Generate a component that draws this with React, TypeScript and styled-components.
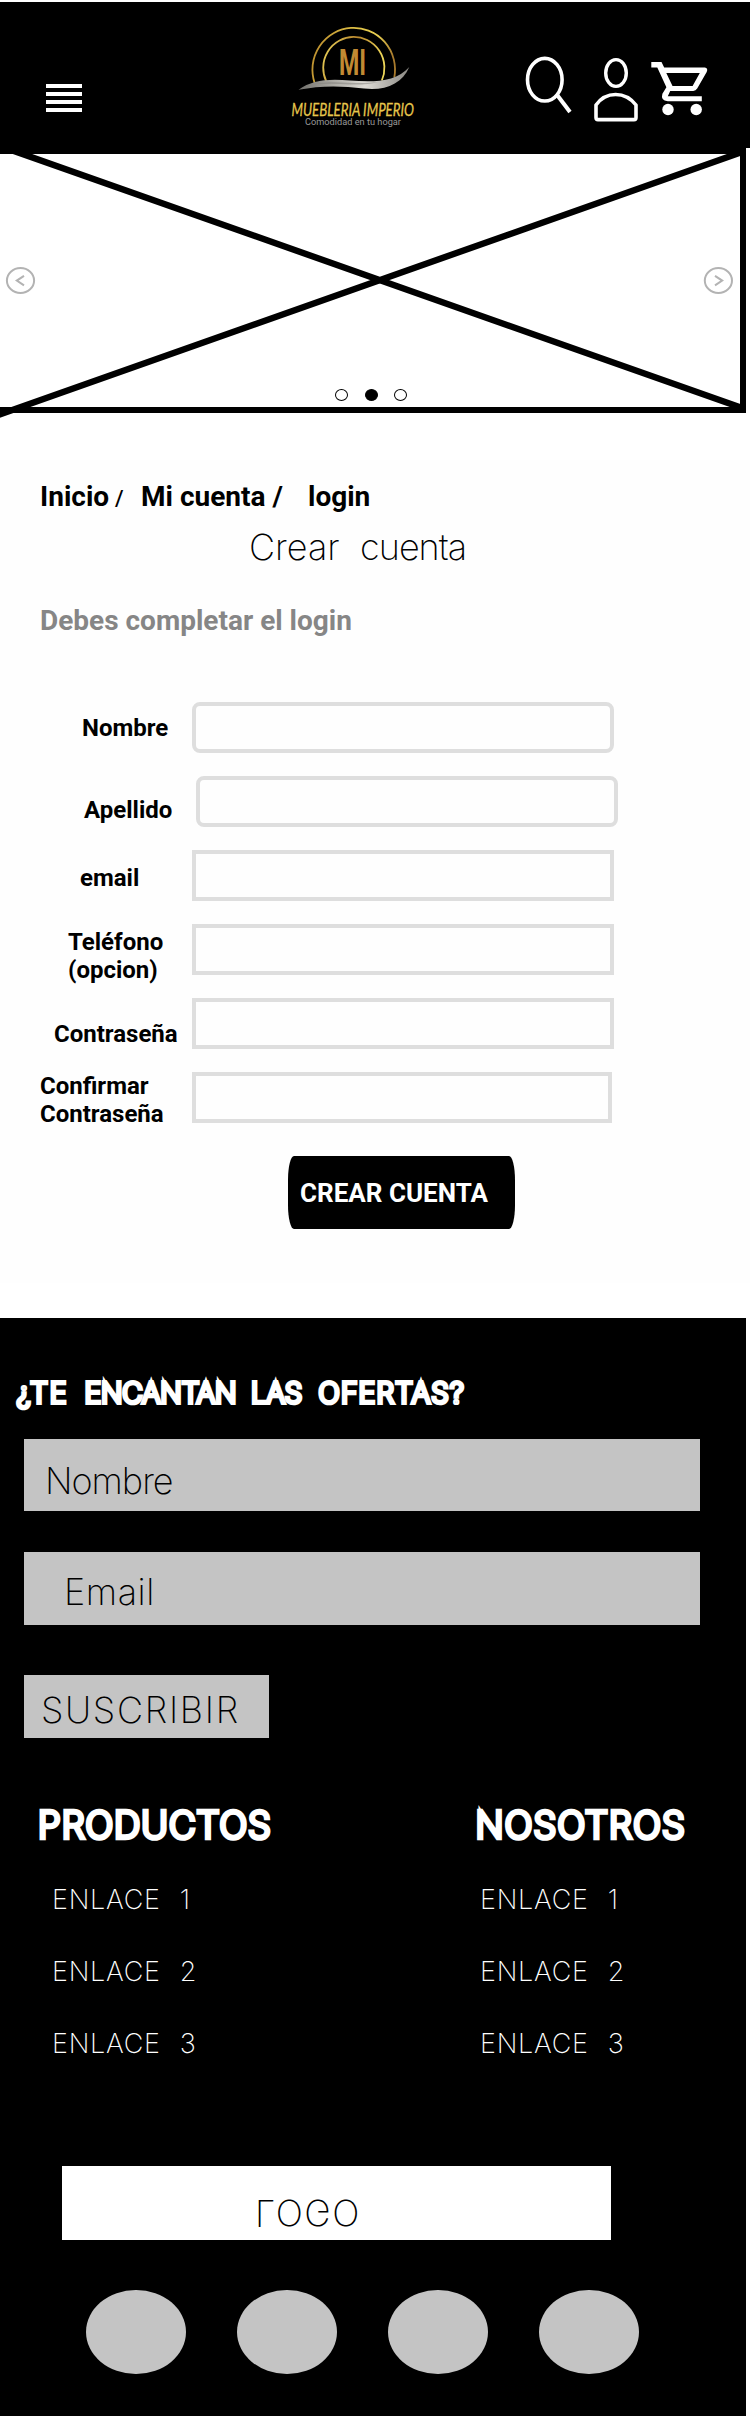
import React from 'react';
import styled, { createGlobalStyle } from 'styled-components';

const GlobalStyle = createGlobalStyle`
  * { box-sizing: border-box; }
  body { margin: 0; background: #fff; font-family: Roboto, sans-serif; color: #000; }
  h1, h2, h3, p, ul { margin: 0; padding: 0; font-weight: inherit; }
  ul { list-style: none; }
`;

const Page = styled.div`
  width: 750px;
  height: 2416px;
  padding-top: 2px;
  overflow: hidden;
`;

const Header = styled.header`
  display: flex;
  height: 146px;
  padding-left: 46px;
  background: #000;
`;

const MenuButton = styled.div`
  display: flex;
  flex-direction: column;
  gap: 4px;
  width: 36px;
  margin-top: 82px;
`;

const MenuBar = styled.span`
  height: 4px;
  background: #fff;
`;

const Brand = styled.svg`
  margin: 13px 0 0 184px;
  flex: none;
  overflow: visible;
`;

const HeaderIcons = styled.svg`
  margin: 50px 0 0 84px;
  flex: none;
`;

const Carousel = styled.section`
  position: relative;
  display: flex;
  justify-content: space-between;
  align-items: flex-start;
  width: 746px;
  height: 265px;
  padding: 112px 6px 0 5px;
  border: 6px solid #000;
  border-left: 0;
`;

const Cross = styled.svg`
  position: absolute;
  left: 0;
  top: 0;
  overflow: visible;
`;

const Arrow = styled.svg`
  position: relative;
  fill: none;
  stroke: #b3b3b3;
  stroke-width: 2;
`;

const Dots = styled.div`
  display: flex;
  gap: 16.6px;
  margin: 123px 0 0 3px;
`;

const Dot = styled.span<{ $on?: boolean }>`
  width: 13px;
  height: 12px;
  border: 1px solid #000;
  border-radius: 50%;
  background: ${p => (p.$on ? '#000' : 'transparent')};
`;

const Main = styled.main`
  height: 823px;
  margin: 47px 0 35px;
  padding-top: 23px;
  background: #fefefe;
`;

const Breadcrumb = styled.nav`
  display: flex;
  height: 28px;
  padding-left: 40px;
  font-size: 28px;
  line-height: 28px;
  font-weight: 700;
  white-space: pre;
`;

const Crumb = styled.span<{ $w: number }>`
  width: ${p => p.$w}px;
`;

const Slash = styled.span`
  width: 26px;
  font-size: 22px;
  font-weight: 500;
  line-height: 32px;
`;

const Thin = styled.span<{ $ls?: number }>`
  font-family: Inter, sans-serif;
  font-weight: 200;
  font-size: 36px;
  line-height: 44px;
  letter-spacing: ${p => p.$ls ?? 0}px;
  white-space: nowrap;
`;

const Title = styled.h1`
  height: 44px;
  margin: 14px 0 0 249px;
  display: flex;
  gap: 20.5px;
`;

const Hint = styled.p`
  margin: 38px 0 67px 40px;
  font-size: 28px;
  line-height: 28px;
  font-weight: 700;
  color: #868686;
`;

const Form = styled.form`
  display: flex;
  flex-direction: column;
  gap: 23px;
`;

const Field = styled.label`
  display: flex;
  align-items: flex-start;
  height: 51px;
`;

const LabelText = styled.span<{ $x: number; $y: number; $w: number }>`
  width: ${p => p.$w}px;
  padding: ${p => p.$y}px 0 0 ${p => p.$x}px;
  font-size: 24px;
  line-height: 28px;
  font-weight: 700;
  white-space: pre;
`;

const Input = styled.span<{ $w: number; $round?: boolean }>`
  width: ${p => p.$w}px;
  height: 51px;
  border: 4px solid #dedede;
  border-radius: ${p => (p.$round ? 8 : 0)}px;
  background: #fefefe;
`;

const Submit = styled.div`
  width: 227px;
  height: 73px;
  margin: 10px 0 0 288px;
  padding: 23px 0 0 12px;
  border-radius: 6px / 24px;
  background: #000;
  color: #fff;
  font-size: 26px;
  line-height: 28px;
  font-weight: 700;
  white-space: nowrap;
`;

const Footer = styled.footer`
  width: 746px;
  height: 1098px;
  padding-top: 59px;
  background: #000;
  color: #fff;
`;

const Offer = styled.h2`
  display: flex;
  height: 32px;
  padding-left: 16.5px;
  font-family: Inter, sans-serif;
  font-weight: 200;
  font-size: 28px;
  line-height: 32px;
  -webkit-text-stroke: 4.2px #fff;
`;

const OfferWord = styled.span<{ $w: number; $ls: number }>`
  width: ${p => p.$w}px;
  letter-spacing: ${p => p.$ls}px;
  white-space: nowrap;
`;

const GreyBox = styled.div<{ $w?: number; $h: number; $top: number; $x: number; $y: number }>`
  width: ${p => p.$w ?? 676}px;
  height: ${p => p.$h}px;
  margin: ${p => p.$top}px 0 0 24.4px;
  padding: ${p => p.$y}px 0 0 ${p => p.$x}px;
  background: #c4c4c4;
  color: #000;
  line-height: 44px;
  display: flex;
`;

const Columns = styled.div`
  display: flex;
  margin-top: 65px;
`;

const Column = styled.div<{ $x: number; $w: number }>`
  flex: none;
  width: ${p => p.$w}px;
  padding-left: ${p => p.$x}px;
`;

const ColumnTitle = styled.h3<{ $ls: number }>`
  height: 44px;
  font-family: Inter, sans-serif;
  font-weight: 200;
  font-size: 36.5px;
  line-height: 44px;
  letter-spacing: ${p => p.$ls}px;
  -webkit-text-stroke: 4.5px #fff;
`;

const Links = styled.ul<{ $x: number }>`
  display: flex;
  flex-direction: column;
  gap: 44px;
  margin: 39px 0 0 ${p => p.$x}px;
  font-family: Inter, sans-serif;
  font-weight: 200;
  font-size: 27px;
  line-height: 28px;
  letter-spacing: 0.7px;
  word-spacing: 11px;
`;

const LogoBox = styled.div`
  display: flex;
  width: 549px;
  height: 74px;
  margin: 108px 0 0 62px;
  padding: 25px 0 0 193px;
  background: #fff;
  color: #000;
`;

const Mirrored = styled(Thin)`
  display: block;
  height: 44px;
  transform: scaleY(-1);
`;

const Circles = styled.div`
  display: flex;
  gap: 51.5px;
  margin: 50px 0 0 86px;
`;

const Circle = styled.span`
  width: 99.5px;
  height: 84px;
  border-radius: 50%;
  background: #c4c4c4;
`;

const fields = [
  { text: 'Nombre', x: 82, y: 12, col: 192, w: 422, round: true },
  { text: 'Apellido', x: 84, y: 20, col: 196, w: 422, round: true },
  { text: 'email', x: 80, y: 14, col: 192, w: 422 },
  { text: 'Teléfono\n(opcion)', x: 68, y: 4, col: 192, w: 422 },
  { text: 'Contraseña', x: 54, y: 22, col: 192, w: 422 },
  { text: 'Confirmar\nContraseña', x: 40, y: 0, col: 192, w: 420 },
];

const links = ['ENLACE 1', 'ENLACE 2', 'ENLACE 3'];

function BrandLogo() {
  return (
    <Brand width="170" height="120" viewBox="266 15 170 120">
      <defs>
        <linearGradient id="gold" x1="0" y1="0.2" x2="1" y2="0.4">
          <stop offset="0" stopColor="#b98a2c" />
          <stop offset="0.5" stopColor="#e2c548" />
          <stop offset="0.75" stopColor="#e8cf52" />
          <stop offset="1" stopColor="#a87a2c" />
        </linearGradient>
        <linearGradient id="gold2" x1="0" y1="0" x2="1" y2="0.3">
          <stop offset="0" stopColor="#f0dc60" />
          <stop offset="0.5" stopColor="#b8872e" />
          <stop offset="1" stopColor="#ecd558" />
        </linearGradient>
        <linearGradient id="silver" x1="0" y1="0" x2="1" y2="0">
          <stop offset="0" stopColor="#6f6e6a" />
          <stop offset="0.3" stopColor="#aaa8a2" />
          <stop offset="0.6" stopColor="#dddbd5" />
          <stop offset="1" stopColor="#8a8883" />
        </linearGradient>
      </defs>
      <path d="M314.6 83 A41.3 41.8 0 1 1 394.3 77.5" fill="none" stroke="url(#gold)" strokeWidth="1.8" />
      <path d="M326.3 81.5 A30.6 31 0 1 1 381.8 80.5" fill="none" stroke="url(#gold2)" strokeWidth="1.8" />
      <path d="M298.5 89.8 C312 80 328 78.5 350 80.5 C374 82.5 396 82 409.3 67 C402 84 385 91 364 88.5 C340 85.5 320 85.5 298.5 89.8Z" fill="url(#silver)" />
      <path d="M314 84 C336 79.5 356 85 378 82 C362 87 340 83 314 84Z" fill="#7e7c77" opacity="0.5" />
      <text x="339" y="75" textLength="27" lengthAdjust="spacingAndGlyphs" fontFamily="Roboto, sans-serif" fontWeight="700" fontSize="37" fill="#c18a33">MI</text>
      <text x="291.5" y="116" textLength="122.5" lengthAdjust="spacingAndGlyphs" fontFamily="Lato, sans-serif" fontStyle="italic" fontWeight="400" fontSize="18" fill="#e6c64c" stroke="#e6c64c" strokeWidth="0.3">MUEBLERIA IMPERIO</text>
      <text x="305" y="125" textLength="96" lengthAdjust="spacingAndGlyphs" fontFamily="Roboto, sans-serif" fontSize="9.3" fill="#999">Comodidad en tu hogar</text>
    </Brand>
  );
}

function Toolbar() {
  return (
    <HeaderIcons width="190" height="76" viewBox="520 52 190 76" fill="none" stroke="#fff">
      <ellipse cx="544.8" cy="79.7" rx="17.3" ry="21.3" strokeWidth="3.6" />
      <path d="M557.5 95.5L570 112" strokeWidth="4" />
      <ellipse cx="616" cy="73" rx="10.3" ry="13.4" strokeWidth="3.4" />
      <path d="M596 105C606 91 625 91 636 105V117.5Q636 119.6 634 119.6H598Q596 119.6 596 117.5Z" strokeWidth="3.6" strokeLinejoin="round" />
      <path fill="#fff" stroke="none" fillRule="evenodd" d="M651.3 62H661.5L664.2 67.6H704.8Q708.4 68.3 706.7 72L697.2 88.6Q695.8 91 693.2 91H670.2L667.8 96.2H701.8V101.3H667.8Q660.3 100.5 662.4 93.8L666.4 87.2L657.3 67.5H651.3ZM666.3 73L672.5 86H692.6L699.8 73Z" />
      <circle cx="668" cy="109.5" r="5.7" fill="#fff" stroke="none" />
      <circle cx="696.2" cy="109.5" r="5.7" fill="#fff" stroke="none" />
    </HeaderIcons>
  );
}

export default function App() {
  return (
    <Page>
      <GlobalStyle />
      <Header>
        <MenuButton>
          <MenuBar /><MenuBar /><MenuBar /><MenuBar />
        </MenuButton>
        <BrandLogo />
        <Toolbar />
      </Header>

      <Carousel>
        <Cross width="740" height="253" viewBox="0 154 740 253">
          <path d="M0 146L745 409M-10 418L742 152" stroke="#000" strokeWidth="6.4" />
        </Cross>
        <Arrow width="31" height="29" viewBox="5 266 31 29">
          <ellipse cx="20.5" cy="280.5" rx="13.6" ry="12.5" />
          <path d="M24 275.8L16.8 280.6L24 285.4" />
        </Arrow>
        <Dots>
          <Dot /><Dot $on /><Dot />
        </Dots>
        <Arrow width="31" height="29" viewBox="703 266 31 29">
          <ellipse cx="718.4" cy="280.5" rx="13.6" ry="12.5" />
          <path d="M715 275.8L722.2 280.6L715 285.4" />
        </Arrow>
      </Carousel>

      <Main>
        <Breadcrumb>
          <Crumb $w={75}>Inicio</Crumb>
          <Slash>/</Slash>
          <Crumb $w={167}>Mi cuenta /</Crumb>
          <Crumb $w={70}>login</Crumb>
        </Breadcrumb>
        <Title>
          <Thin>Crear</Thin>
          <Thin $ls={-1}>cuenta</Thin>
        </Title>
        <Hint>Debes completar el login</Hint>
        <Form>
          {fields.map(f => (
            <Field key={f.text}>
              <LabelText $x={f.x} $y={f.y} $w={f.col}>{f.text}</LabelText>
              <Input $w={f.w} $round={f.round} />
            </Field>
          ))}
          <Submit>CREAR CUENTA</Submit>
        </Form>
      </Main>

      <Footer>
        <Offer>
          <OfferWord $w={68} $ls={2}>¿TE</OfferWord>
          <OfferWord $w={166.5} $ls={-0.1}>ENCANTAN</OfferWord>
          <OfferWord $w={67.5} $ls={-0.2}>LAS</OfferWord>
          <OfferWord $w={150} $ls={1.3}>OFERTAS?</OfferWord>
        </Offer>
        <GreyBox $h={72} $top={30} $x={20.5} $y={20}><Thin $ls={-1}>Nombre</Thin></GreyBox>
        <GreyBox $h={73} $top={41} $x={39.5} $y={18}><Thin $ls={0.6}>Email</Thin></GreyBox>
        <GreyBox $w={245} $h={63} $top={50} $x={16.5} $y={13}><Thin $ls={1.7}>SUSCRIBIR</Thin></GreyBox>
        <Columns>
          <Column $x={38} $w={474}>
            <ColumnTitle $ls={1.1}>PRODUCTOS</ColumnTitle>
            <Links $x={14}>{links.map(l => <li key={l}>{l}</li>)}</Links>
          </Column>
          <Column $x={1.5} $w={250}>
            <ColumnTitle $ls={1.3}>NOSOTROS</ColumnTitle>
            <Links $x={4.5}>{links.map(l => <li key={l}>{l}</li>)}</Links>
          </Column>
        </Columns>
        <LogoBox><Mirrored $ls={1.4}>LOGO</Mirrored></LogoBox>
        <Circles>
          <Circle /><Circle /><Circle /><Circle />
        </Circles>
      </Footer>
    </Page>
  );
}
